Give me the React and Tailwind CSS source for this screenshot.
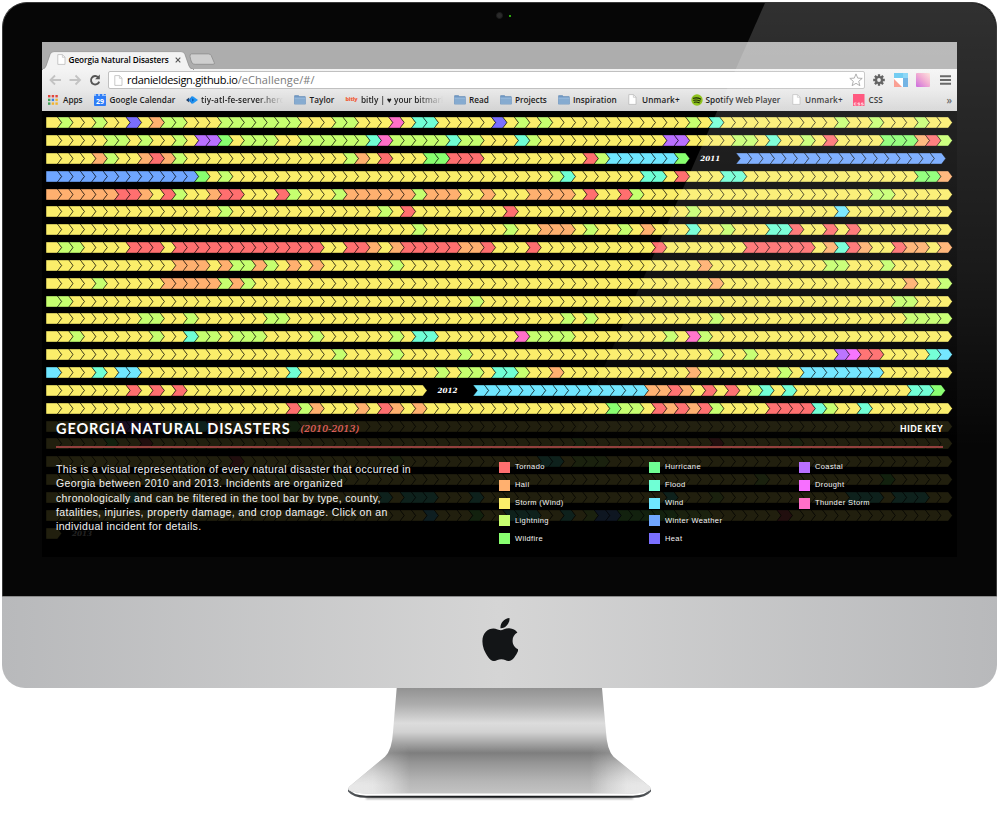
import React from "react";

const COLORS = {
  R: "#ff6f6f",
  O: "#ffb06f",
  Y: "#fbee6a",
  L: "#c6ff6f",
  G: "#88ff6f",
  H: "#6fff94",
  F: "#6fffd5",
  W: "#6fe6ff",
  B: "#6fa6ff",
  P: "#7a6fff",
  C: "#b96fff",
  D: "#f76fff",
  T: "#ff6fc8",
};

const PITCH = 11.42;

// Each row lists its segments; a segment is [cell count, "index+code+run" exceptions to Storm (Wind)].
const ROWS = [
  [[79, "1L 4L 7P 9O 10L2 15L7 25L2 30T 32F2 39P 41L 43L 56L 58F 69L 72L 76L"]],
  [[79, "5L2 8L 11L 13C2 15G 17L3 22L6 28F 29T 30L5 35F 36L2 41F 42L 54C2 60L2 63F 66L 68R 73G3 76O 77R 78L"]],
  [[56, "4O 5L 8O 9R 10O 11L 26L 27O 29R 33G2 35R3 47R 48L 49W6 55G"], "2011", [18, "0B18"]],
  [[79, "0B13 13G 15L 44L 45F 52F2 55R 59F2 76G2 78O"]],
  [[79, "0O6 6R2 8O 10R 11L 14O 15R2 20R 21L 25L 26O6 32L 33O3 38O 42O4 47R 50R 51L 72L2"]],
  [[79, "15L 29L 31R 40R 56L 69W"]],
  [[79, "32L 40L 43O3 47L 50L 52O 56F 59L 63F2 65R 68R 70R"]],
  [[79, "1L2 7R3 11R13 26R2 28O 30O 31R5 36O2 38R 42R 53R 61R6 68O 69F 70R 71O 74R 75O2 78O"]],
  [[79, "11O3 15O 16L2 18O 19L 21O 23O 30L 57O 68L2 73L"]],
  [[79, "4L 10O5 15L 16O 17L 58O 75O 78L"]],
  [[79, "0L2 37L 74L2"]],
  [[79, "8L2 12L 19L2 45L 47L 58L 75L4"]],
  [[79, "2L 9L 12F 13L2 16L3 23L 30L 32F2 41T 42L4 54L 56T 57L"]],
  [[79, "25L 30L 36L 58L 61L 69C 70D 71R2 77F 78W"]],
  [[79, "0W 4F 6W2 21F 34L 36L2 39F2 41L 44O 56O 64L 66W7"]],
  [[33, "7R 9R 11R"], "2012", [41, "0W15 15O2 17R 18O 20R 22R 24L 25F 27F 38F2 40G"]],
  [[79, "21R 22L 23O 27O 29R 30O 32O 49G 50L2 53R 54O 55R 56O 57R 58L 63R4 67F 68L 71F"]],
  [[79, "6C4 11F3 14R 21G"]],
  [[79, "5G 8R 46L 58R 65L"]],
  [[79, "16R 30L 43F2 46L 47L2"]],
  [[79, "20L 25L 62L 73G"]],
  [[79, "7F 29F 31F3 37F 54F 58L 70F3 74F3"]],
  [[79, "33W 37G 10L 40F3 45F 47L 48B2 50G5 55L3 64R"]],
  [[1, ""], "2013"],
];

function expand(count, spec) {
  const cells = Array(count).fill("Y");
  spec.split(" ").forEach((part) => {
    const m = /^(\d+)([A-Z])(\d*)$/.exec(part);
    if (!m) return;
    const n = m[3] ? Number(m[3]) : 1;
    for (let i = 0; i < n; i++) cells[Number(m[1]) + i] = m[2];
  });
  return cells;
}

function Segment({ count, spec, flat }) {
  const cells = expand(count, spec);
  const w = count * PITCH;
  return (
    <svg width={w} height="13" viewBox={`0 0 ${w} 13`} className="shrink-0 overflow-visible">
      {cells.map((c, i) => {
        const x = i * PITCH;
        const notch = flat && i === 0 ? x : x + 4.3;
        return (
          <polygon
            key={i}
            points={`${x},0.9 ${x + PITCH},0.9 ${x + 15.6},6.5 ${x + PITCH},12.1 ${x},12.1 ${notch},6.5`}
            fill={COLORS[c]}
            stroke="#000"
            strokeOpacity="0.58"
            strokeWidth="0.8"
          />
        );
      })}
    </svg>
  );
}

function Timeline() {
  return (
    <div className="flex flex-col pl-[4.2px] pt-[3.25px]">
      {ROWS.map((row, r) => (
        <div key={r} className="flex h-[17.85px] shrink-0 items-center">
          {row.map((part, i) =>
            typeof part === "string" ? (
              <div
                key={i}
                className="w-[50px] shrink-0 pr-[1px] pt-[1px] text-center font-['DejaVu_Serif',serif] text-[7.2px] font-bold italic leading-[12px] text-white"
              >
                {part}
              </div>
            ) : (
              <Segment key={i} count={part[0]} spec={part[1]} flat={i === 0} />
            )
          )}
        </div>
      ))}
    </div>
  );
}

const Doc = () => (
  <svg width="9" height="11" viewBox="0 0 9 11" className="shrink-0">
    <path d="M.8.6h4.7L8 3.2v7.2H.8z" fill="#fff" stroke="#b3b3b3" strokeWidth=".7" />
    <path d="M5.4.8v2.5h2.5" fill="none" stroke="#b3b3b3" strokeWidth=".6" />
  </svg>
);

const Folder = () => (
  <svg width="12" height="10" viewBox="0 0 12 10" className="shrink-0">
    <path d="M.5 1Q.5.4 1 .4h3.4l.9 1.1h5.6q.5 0 .5.6v7H.5z" fill="#6f98c4" stroke="#5b83b0" strokeWidth=".5" />
    <path d="M.5 3h11v6.2h-11z" fill="#86abd0" />
    <path d="M.5 3h11" stroke="#b2d0ec" strokeWidth=".6" />
  </svg>
);

const AppsIcon = () => (
  <svg width="10" height="10" viewBox="0 0 10 10" className="shrink-0">
    {["#e2443b", "#e2443b", "#e2443b", "#3f9f55", "#3d7fe0", "#f2b32c", "#3f9f55", "#f2b32c", "#f2b32c"].map((c, i) => (
      <rect key={i} x={(i % 3) * 3.7} y={Math.floor(i / 3) * 3.7} width="2.4" height="2.4" fill={c} />
    ))}
  </svg>
);

const CalendarIcon = () => (
  <div className="flex h-[12px] w-[12px] shrink-0 items-end justify-center rounded-[1px] border-t-2 border-dotted border-[#9cc4fb] bg-[#2f7df6] font-['Open_Sans',sans-serif] text-[7px] font-bold leading-[9px] text-white">
    29
  </div>
);

const TiyIcon = () => (
  <svg width="12" height="10" viewBox="0 0 12 10" className="shrink-0">
    <path d="M0 5l3.2-2.6v5.2z" fill="#1f3f66" />
    <path d="M2.4 5l3.6-4v8z" fill="#1d7fe0" />
    <path d="M6.5 1L12 5 6.500 9 4.600 5z" fill="#2196f3" />
    <path d="M6 3.200L8.200 5 6 6.800z" fill="#0d5fb8" />
  </svg>
);

const Spotify = () => (
  <svg width="12" height="12" viewBox="0 0 12 12" className="shrink-0">
    <circle cx="6" cy="6" r="5.700" fill="#8fc31f" />
    <path d="M2.400 4.300q4-1 7.200.8M2.800 6.300q3.400-.8 6.200.7M3.200 8.200q2.800-.6 5 .6" fill="none" stroke="#1c2a05" strokeWidth="1.150" strokeLinecap="round" />
  </svg>
);

const CssIcon = () => (
  <svg width="12" height="12" viewBox="0 0 12 12" className="shrink-0">
    <rect width="11.500" height="12" fill="#ff3f6c" />
    <path d="M3.400 9H1.300v2h2.100M6.800 9H4.900v.9h1.900v1.100H4.700M10.200 9H8.400v.9h1.800v1.100H8.200" fill="none" stroke="#ffe3ea" strokeWidth=".8" />
  </svg>
);

const BOOKMARKS = [
  { w: "w-[46px]", icon: <AppsIcon />, iw: "w-[15px]", text: "Apps", ls: "tracking-[0px]" },
  { w: "w-[92px]", icon: <CalendarIcon />, iw: "w-[15.500px]", text: "Google Calendar", ls: "tracking-[0.050px]" },
  { w: "w-[108px]", icon: <TiyIcon />, iw: "w-[15px]", text: "tiy-atl-fe-server.herokuapp", ls: "tracking-[0.120px]", fade: true, tw: "w-[82px]" },
  { w: "w-[51.500px]", icon: <Folder />, iw: "w-[15.500px]", text: "Taylor", ls: "tracking-[0.050px]" },
  {
    w: "w-[108px]",
    icon: <span className="font-['Open_Sans',sans-serif] text-[5.500px] font-extrabold leading-none tracking-[-0.2px] text-[#f0603a]">bitly</span>,
    iw: "w-[15.500px]",
    text: "bitly | ♥ your bitmarks",
    ls: "tracking-[0px]",
    fade: true,
    tw: "w-[82px]",
  },
  { w: "w-[46px]", icon: <Folder />, iw: "w-[15.500px]", text: "Read", ls: "tracking-[0px]" },
  { w: "w-[58px]", icon: <Folder />, iw: "w-[15.500px]", text: "Projects", ls: "tracking-[0px]" },
  { w: "w-[70.500px]", icon: <Folder />, iw: "w-[15.500px]", text: "Inspiration", ls: "tracking-[0.060px]" },
  { w: "w-[62.500px]", icon: <Doc />, iw: "w-[14px]", text: "Unmark+", ls: "tracking-[0.140px]" },
  { w: "w-[101px]", icon: <Spotify />, iw: "w-[15px]", text: "Spotify Web Player", ls: "tracking-[0.050px]" },
  { w: "w-[61.500px]", icon: <Doc />, iw: "w-[13.500px]", text: "Unmark+", ls: "tracking-[0.140px]" },
  { w: "w-[40px]", icon: <CssIcon />, iw: "w-[15.500px]", text: "CSS", ls: "tracking-[0px]" },
];

function Browser() {
  return (
    <div className="flex h-[68.500px] shrink-0 flex-col bg-[#adadad] font-['Open_Sans',sans-serif] text-black">
      <div className="flex h-[27px] shrink-0 items-end">
        <div className="relative h-[18px] w-[149px] shrink-0">
          <svg width="175" height="19" viewBox="0 0 175 19" className="absolute left-0 top-0">
            <path d="M150 12q-1.500-3-2-6.500-.3-2.600 1.500-2.600h17q2 0 2.700 1.600l3 7q.8 1.800-1 1.800h-18q-2 0-3.200-1.300z" fill="#cfcfcf" stroke="#8d8d8d" strokeWidth=".8" />
            <path d="M0 18.500q3-.5 4-3.500l4-11.500Q9 .6 12 .6h127q3 0 4 2.900l4 11.500q1 3.200 5 3.500z" fill="#f3f3f3" stroke="#8a8a8a" strokeWidth=".7" />
            <path d="M1 18.700h150" stroke="#f2f2f2" strokeWidth="1.200" />
          </svg>
          <div className="relative flex h-[17px] items-center pl-[15px]">
            <div className="w-[11.500px] shrink-0"><Doc /></div>
            <div className="w-[106.500px] shrink-0 whitespace-nowrap text-[8.200px] font-semibold leading-[12px] tracking-[-0.060px]">Georgia Natural Disasters</div>
            <svg width="6" height="6" viewBox="0 0 6 6" className="shrink-0">
              <path d="M.7.7l4.600 4.600M5.300.7L.7 5.300" stroke="#555" strokeWidth="1.100" />
            </svg>
          </div>
        </div>
      </div>
      <div className="flex min-h-0 grow flex-col bg-gradient-to-b from-[#f4f4f4] via-[#e9e9e9] to-[#d3d3d3]">
        <div className="flex h-[21px] items-center pl-[7px] pt-[1px]">
          <svg width="53" height="14" viewBox="0 0 53 14" className="shrink-0">
            <path d="M12 7H1.500M6 2.500L1.500 7 6 11.500M20.500 7H31M26.500 2.500L31 7l-4.500 4.500" fill="none" stroke="#c3c3c3" strokeWidth="1.800" />
            <path d="M49.200 4.300A4.200 4.200 0 1 0 50.200 8.600" fill="none" stroke="#555" strokeWidth="1.900" />
            <path d="M50.800 1.500v4.700h-4.700z" fill="#555" />
          </svg>
          <div className="ml-[5.500px] mr-[8px] flex h-[18.500px] w-[757px] shrink-0 items-center rounded-[2px] border border-[#c0c0c0] bg-white pl-[5px]">
            <div className="w-[13.500px] shrink-0"><Doc /></div>
            <div className="grow whitespace-nowrap text-[11px] font-medium leading-[16px] tracking-[-0.300px]">
              rdanieldesign.github.io<span className="font-normal tracking-[0.080px] text-[#7a7a7a]">/eChallenge/#/</span>
            </div>
            <svg width="14" height="14" viewBox="0 0 14 14" className="mr-[1px] shrink-0">
              <path d="M7 .9l1.700 4.200 4.500.3-3.500 2.900 1.200 4.400L7 10.300l-3.900 2.400 1.200-4.400L.8 5.400l4.500-.3z" fill="#fff" stroke="#999" strokeWidth=".9" />
            </svg>
          </div>
          <svg width="12" height="12" viewBox="0 0 12 12" className="shrink-0">
            <g stroke="#4a4a4a" strokeWidth="2.300">
              <path d="M6 .2v11.600M.2 6h11.600M1.900 1.900l8.200 8.200M10.100 1.900l-8.200 8.200" />
            </g>
            <circle cx="6" cy="6" r="4" fill="#4a4a4a" />
            <circle cx="6" cy="6" r="1.900" fill="#ececec" />
          </svg>
          <svg width="14" height="14" viewBox="0 0 14 14" className="ml-[9px] shrink-0">
            <path d="M0 0h14v5H0z" fill="#5cc5f0" />
            <path d="M0 5h9v9H0z" fill="#fff" />
            <path d="M9 5h5v9H9z" fill="#5da8e0" />
            <path d="M9 0h5v5H9z" fill="#7ad0f5" />
            <path d="M0 6l8 8H0z" fill="#f99082" />
          </svg>
          <div className="ml-[8px] h-[14px] w-[14px] shrink-0 rounded-[1px] bg-gradient-to-tr from-[#c34fd8] via-[#ee9bcb] to-[#fde0d6]" />
          <svg width="11" height="10" viewBox="0 0 11 10" className="ml-[10px] shrink-0">
            <path d="M0 1.200h11M0 5h11M0 8.800h11" stroke="#505050" strokeWidth="2" />
          </svg>
        </div>
        <div className="flex h-[19px] items-center pl-[6px] text-[8.200px] font-semibold leading-[12px] text-[#1c1c1c]">
          {BOOKMARKS.map((b, i) => (
            <div key={i} className={`flex shrink-0 items-center ${b.w}`}>
              <div className={`flex shrink-0 items-center ${b.iw}`}>{b.icon}</div>
              <div
                className={`whitespace-nowrap ${b.ls} ${
                  b.fade ? `overflow-hidden [mask-image:linear-gradient(to_right,#000_68%,transparent_100%)] ${b.tw}` : ""
                }`}
              >
                {b.text}
              </div>
            </div>
          ))}
          <div className="grow pr-[5px] text-right text-[10px] text-[#555]">»</div>
        </div>
      </div>
    </div>
  );
}

const KEY = [
  [["R", "Tornado"], ["O", "Hail"], ["Y", "Storm (Wind)"], ["L", "Lightning"], ["G", "Wildfire"]],
  [["H", "Hurricane"], ["F", "Flood"], ["W", "Wind"], ["B", "Winter Weather"], ["P", "Heat"]],
  [["C", "Coastal"], ["D", "Drought"], ["T", "Thunder Storm"]],
];

function KeyPanel() {
  return (
    <div className="absolute inset-x-0 bottom-0 flex h-[141px] flex-col bg-black/87 px-[14px] text-white">
      <div className="flex h-[32px] items-center border-b-2 border-[#93403d]">
        <h1 className="w-[244.500px] whitespace-nowrap pb-[4px] font-['Lato',sans-serif] text-[14.500px] font-bold leading-[18px] tracking-[0.880px]">
          GEORGIA NATURAL DISASTERS
        </h1>
        <span className="grow whitespace-nowrap pb-[4px] font-['DejaVu_Serif',serif] text-[9.300px] italic leading-[14px] tracking-[0.100px] text-[#f26a68] [-webkit-text-stroke:0.150px_#f26a68]">(2010-2013)</span>
        <span className="pb-[4px] font-['Lato',sans-serif] text-[8.500px] font-black leading-[12px] tracking-[0.5px]">HIDE KEY</span>
      </div>
      <div className="flex">
        <p className="w-[443px] shrink-0 whitespace-pre pt-[14px] font-['Liberation_Sans',sans-serif] text-[10.500px] leading-[14.250px] tracking-[0.35px] text-[#f2f2f2]">
          {"This is a visual representation of every natural disaster that occurred in\nGeorgia between 2010 and 2013. Incidents are organized\nchronologically and can be filtered in the tool bar by type, county,\nfatalities, injuries, property damage, and crop damage. Click on an\nindividual incident for details."}
        </p>
        {KEY.map((col, i) => (
          <ul key={i} className="w-[150px] shrink-0 pt-[10.500px]">
            {col.map(([c, label]) => (
              <li key={label} className="flex h-[17.850px] items-center gap-[5px] whitespace-nowrap font-['Liberation_Sans',sans-serif] text-[7.500px] leading-[12px] tracking-[0.38px] text-[#f4f4f4]">
                <span className="h-[11px] w-[11px] shrink-0" style={{ backgroundColor: COLORS[c] }} />
                {label}
              </li>
            ))}
          </ul>
        ))}
      </div>
    </div>
  );
}

function Stand() {
  return (
    <svg width="310" height="120" viewBox="345 688 310 120" className="shrink-0">
      <defs>
        <linearGradient id="metal" x1="0" y1="688" x2="0" y2="798" gradientUnits="userSpaceOnUse">
          <stop offset="0" stopColor="#929292" />
          <stop offset=".15" stopColor="#adadad" />
          <stop offset=".32" stopColor="#dcdcdc" />
          <stop offset=".4" stopColor="#d2d2d2" />
          <stop offset=".5" stopColor="#a6a6a6" />
          <stop offset=".59" stopColor="#7e7e7e" />
          <stop offset=".68" stopColor="#959595" />
          <stop offset=".85" stopColor="#b6b6b6" />
          <stop offset="1" stopColor="#c8c8c8" />
        </linearGradient>
        <linearGradient id="side" x1="345" y1="0" x2="655" y2="0" gradientUnits="userSpaceOnUse">
          <stop offset="0" stopColor="#e8e8e8" />
          <stop offset=".09" stopColor="#e8e8e8" stopOpacity=".95" />
          <stop offset=".15" stopColor="#e8e8e8" stopOpacity=".55" />
          <stop offset=".21" stopColor="#e8e8e8" stopOpacity="0" />
          <stop offset=".79" stopColor="#e8e8e8" stopOpacity="0" />
          <stop offset=".85" stopColor="#e8e8e8" stopOpacity=".55" />
          <stop offset=".91" stopColor="#e8e8e8" stopOpacity=".95" />
          <stop offset="1" stopColor="#e8e8e8" />
        </linearGradient>
        <linearGradient id="drop" x1="0" y1="742" x2="0" y2="785" gradientUnits="userSpaceOnUse">
          <stop offset="0" stopColor="#000" />
          <stop offset="1" stopColor="#fff" />
        </linearGradient>
        <mask id="lower" maskUnits="userSpaceOnUse" x="345" y="688" width="310" height="120">
          <rect x="345" y="688" width="310" height="120" fill="url(#drop)" />
        </mask>
        <linearGradient id="edge" x1="348" y1="0" x2="651" y2="0" gradientUnits="userSpaceOnUse">
          <stop offset="0" stopColor="#5a5e62" />
          <stop offset=".08" stopColor="#2a2c2e" />
          <stop offset=".5" stopColor="#15171a" />
          <stop offset=".92" stopColor="#2a2c2e" />
          <stop offset="1" stopColor="#5a5e62" />
        </linearGradient>
        <filter id="soft" filterUnits="userSpaceOnUse" x="345" y="790" width="310" height="18">
          <feGaussianBlur stdDeviation="1" />
        </filter>
      </defs>
      <path d="M366 798h267" stroke="#777" strokeWidth="1.600" filter="url(#soft)" />
      <path d="M348 788.500v3q5 6.300 18 6.300h267q13 0 18-6.300v-3z" fill="url(#edge)" />
      <path d="M348 788.500q4 6.500 18 7.300h267q14-.8 18-7.300z" fill="#fff" />
      <path
        d="M396.700 688L393 732Q392 750 385 756.700L349.500 786.500Q347 789 349.500 790.500Q357 793.500 366 793.500H633Q642 793.500 649.500 790.500Q652 789 649.500 786.500L613.500 756.700Q607 750 606 732L602 688Z"
        fill="url(#metal)"
      />
      <path
        d="M396.700 688L393 732Q392 750 385 756.700L349.500 786.500Q347 789 349.500 790.500Q357 793.500 366 793.500H633Q642 793.500 649.500 790.500Q652 789 649.500 786.500L613.500 756.700Q607 750 606 732L602 688Z"
        fill="url(#side)"
        mask="url(#lower)"
      />
    </svg>
  );
}

export default function App() {
  return (
    <div className="flex h-[816px] w-[1000px] flex-col items-center overflow-hidden bg-white pt-[2px]">
      <div className="relative mr-[1px] flex h-[594px] w-[995px] shrink-0 flex-col items-center rounded-t-[25px] border border-b-0 border-[#3a3a3a] bg-[#060606]">
        <div className="flex h-[39px] w-full shrink-0 items-start justify-center pt-[9px]">
          <div className="flex items-center gap-[6px] pl-[8px]">
            <div className="h-[7px] w-[7px] rounded-full border border-[#1b1b1b] bg-[#2a2a2a]" />
            <div className="h-[2px] w-[2px] rounded-full bg-[#3be010]" />
          </div>
        </div>
        <div className="relative flex h-[515px] w-[915px] shrink-0 flex-col overflow-hidden bg-black">
          <Browser />
          <Timeline />
          <KeyPanel />
        </div>
        <div className="pointer-events-none absolute inset-0 rounded-tr-[25px] bg-gradient-to-b from-white/17 via-white/8 via-45% to-transparent to-75% [clip-path:polygon(762px_0,100%_0,100%_100%,500px_100%)]" />
      </div>
      <div className="mr-[1px] flex h-[92px] w-[995px] shrink-0 items-center justify-center rounded-b-[23px] border-t border-[#8a8a8a] bg-gradient-to-r from-[#b8b9bb] via-[#d5d5d5] to-[#b8b9bb]">
        <svg width="36" height="43" viewBox="4 32 367 448" className="mb-[6px] shrink-0" fill="#131517">
          <path d="M318.700 268.700c-.2-36.700 16.400-64.400 50-84.800-18.800-26.900-47.200-41.700-84.700-44.600-35.500-2.800-74.300 20.700-88.500 20.700-15 0-49.400-19.700-76.400-19.700C63.300 141.200 4 184.800 4 273.500q0 39.300 14.400 81.200c12.800 36.700 59 126.700 107.200 125.200 25.200-.6 43-17.900 75.800-17.900 31.800 0 48.300 17.900 76.400 17.900 48.600-.7 90.400-82.500 102.600-119.300-65.200-30.700-61.700-90-61.700-91.900zm-56.600-164.200c27.300-32.400 24.800-61.900 24-72.500-24.100 1.400-52 16.400-67.900 34.900-17.500 19.800-27.800 44.300-25.600 71.900 26.100 2 49.900-11.400 69.500-34.300z" />
        </svg>
      </div>
      <Stand />
    </div>
  );
}
